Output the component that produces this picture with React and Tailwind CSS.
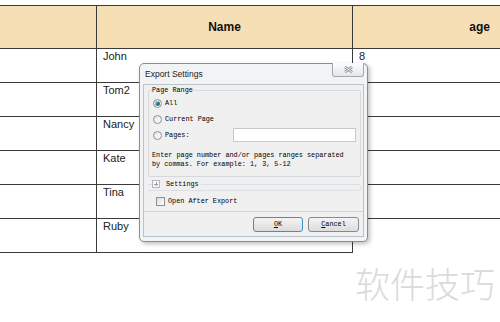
import React from 'react';

const ROWS = [
  ['John', '8'],
  ['Tom2', ''],
  ['Nancy', ''],
  ['Kate', ''],
  ['Tina', ''],
  ['Ruby', ''],
];

const mono = "font-['Liberation_Mono','Courier_New',monospace] text-[6.8px] text-black";

function Radio({ checked }) {
  return (
    <span className="flex h-[9px] w-[9px] shrink-0 items-center justify-center rounded-full border border-[#8e8f8f] bg-gradient-to-br from-[#e2e2e2] to-white">
      {checked && <span className="h-[5px] w-[5px] rounded-full bg-[#2a6f9e] shadow-[inset_1px_1px_1px_rgba(255,255,255,0.6)]" />}
    </span>
  );
}

function Button({ label, def }) {
  return (
    <div
      className={`flex h-[15px] items-center justify-center rounded-[3px] border bg-gradient-to-b from-[#f4f4f4] to-[#dcdcdc] ${
        def ? 'w-[50px] border-[#3c8fc8]' : 'w-[51px] border-[#8a8a8a]'
      }`}
    >
      <span className={mono}>
        <span className="underline">{label[0]}</span>
        {label.slice(1)}
      </span>
    </div>
  );
}

function ExportDialog() {
  return (
    <div className="absolute left-[139px] top-[63px] flex h-[179px] w-[229px] flex-col rounded-[5px] border border-[#8d8d8d] bg-[#f2f3f5] px-[3px] pb-[4px] shadow-[2px_2px_4px_rgba(0,0,0,0.25)]">
      {/* title bar */}
      <div className="relative flex h-[20px] items-center pl-[2px]">
        <span className="font-['Liberation_Sans',Arial,sans-serif] text-[8.5px] text-[#222]">Export Settings</span>
        <div className="absolute right-[0px] top-[-1px] flex h-[14px] w-[32px] items-center justify-center rounded-b-[3px] border border-t-0 border-[#a3a7ab] bg-gradient-to-b from-[#fdfdfd] to-[#e4e6e8]">
          <svg width="9" height="7" viewBox="0 0 9 7">
            <path d="M1 1 L8 6 M8 1 L1 6" stroke="#8a8a8a" strokeWidth="2.6" />
            <path d="M1 1 L8 6 M8 1 L1 6" stroke="#fafafa" strokeWidth="1" />
          </svg>
        </div>
      </div>

      {/* client area */}
      <div className="flex flex-1 flex-col border border-[#b9c3cc] bg-[#f0f0f0]">
        {/* Page Range group */}
        <div className="relative ml-[4px] mr-[2px] mt-[5px] h-[87px] rounded-[2px] border border-[#d6d9dc]">
          <span className={`absolute left-[3px] top-[-5px] bg-[#f0f0f0] leading-[8px] ${mono}`}>Page Range</span>
          <div className="flex flex-col pt-[4px]">
            <div className="flex h-[16px] items-center pl-[4px]">
              <Radio checked />
              <span className={`ml-[3px] ${mono}`}>All</span>
            </div>
            <div className="flex h-[16px] items-center pl-[4px]">
              <Radio />
              <span className={`ml-[3px] ${mono}`}>Current Page</span>
            </div>
            <div className="flex h-[16px] items-center pl-[4px] pr-[4px]">
              <Radio />
              <span className={`ml-[3px] ${mono}`}>Pages:</span>
              <div className="ml-auto h-[14px] w-[123px] border border-[#c5c8cc] bg-white" />
            </div>
          </div>
          <p className={`ml-[3px] mt-[8px] leading-[8.5px] ${mono}`}>
            Enter page number and/or pages ranges separated
            <br />
            by commas. For example: 1, 3, 5-12
          </p>
        </div>

        {/* Settings expander */}
        <div className="relative ml-[4px] mr-[2px] mt-[7px] h-[7px] rounded-r-[3px] border border-l-0 border-[#dcdfe2]">
          <div className="absolute left-[4px] top-[-6px] flex items-center bg-[#f0f0f0] pr-[2px]">
            <span className="relative h-[8px] w-[8px] border border-[#b4b8bc] bg-[#f7f7f7]">
              <span className="absolute left-[1px] top-[2.5px] h-px w-[4px] bg-[#9a9ea2]" />
              <span className="absolute left-[2.5px] top-[1px] h-[4px] w-px bg-[#9a9ea2]" />
            </span>
            <span className={`ml-[6px] ${mono}`}>Settings</span>
          </div>
        </div>

        {/* Open after export */}
        <div className="ml-[12px] mt-[2px] flex h-[16px] items-center">
          <span className="h-[9px] w-[9px] border border-[#8e8f8f] bg-gradient-to-br from-[#dcdcdc] to-white" />
          <span className={`ml-[3px] ${mono}`}>Open After Export</span>
        </div>

        {/* footer */}
        <div className="mt-auto flex h-[25px] items-start justify-end gap-[5px] border-t border-[#d5d5d5] pr-[4px] pt-[5px]">
          <Button label="OK" def />
          <Button label="Cancel" />
        </div>
      </div>
    </div>
  );
}

export default function App() {
  const line = 'border-[#3a3a3a]';
  return (
    <div className="relative h-[322px] w-[500px] overflow-hidden bg-white font-['Liberation_Sans',Arial,sans-serif]">
      <div className={`mt-[5px] grid grid-cols-[97px_256px_147px] border-t ${line}`}>
        <div className={`h-[43px] border-b border-r bg-[#f6dfb5] ${line}`} />
        <div className={`flex h-[43px] items-center justify-center border-b border-r bg-[#f6dfb5] text-[12px] font-bold text-[#111] ${line}`}>
          Name
        </div>
        <div className={`flex h-[43px] items-center justify-end border-b bg-[#f6dfb5] pr-[10px] text-[12px] font-bold text-[#111] ${line}`}>
          age
        </div>
        {ROWS.map(([name, age], i) => (
          <React.Fragment key={name}>
            <div className={`h-[34px] border-b border-r ${line}`} />
            <div className={`h-[34px] border-b border-r pl-[6px] pt-[1px] text-[11px] leading-[13px] text-[#222] ${line}`}>
              {name}
            </div>
            <div
              className={`h-[34px] pl-[6px] pt-[1px] text-[11px] leading-[13px] text-[#222] ${
                i === ROWS.length - 1 ? '' : 'border-b'
              } ${line}`}
            >
              {age}
            </div>
          </React.Fragment>
        ))}
      </div>

      <ExportDialog />

      <div className="absolute left-[355px] top-[265px] font-['Noto_Sans_CJK_SC',sans-serif] text-[35px] font-light leading-none text-[#dadada]">
        软件技巧
      </div>
    </div>
  );
}
